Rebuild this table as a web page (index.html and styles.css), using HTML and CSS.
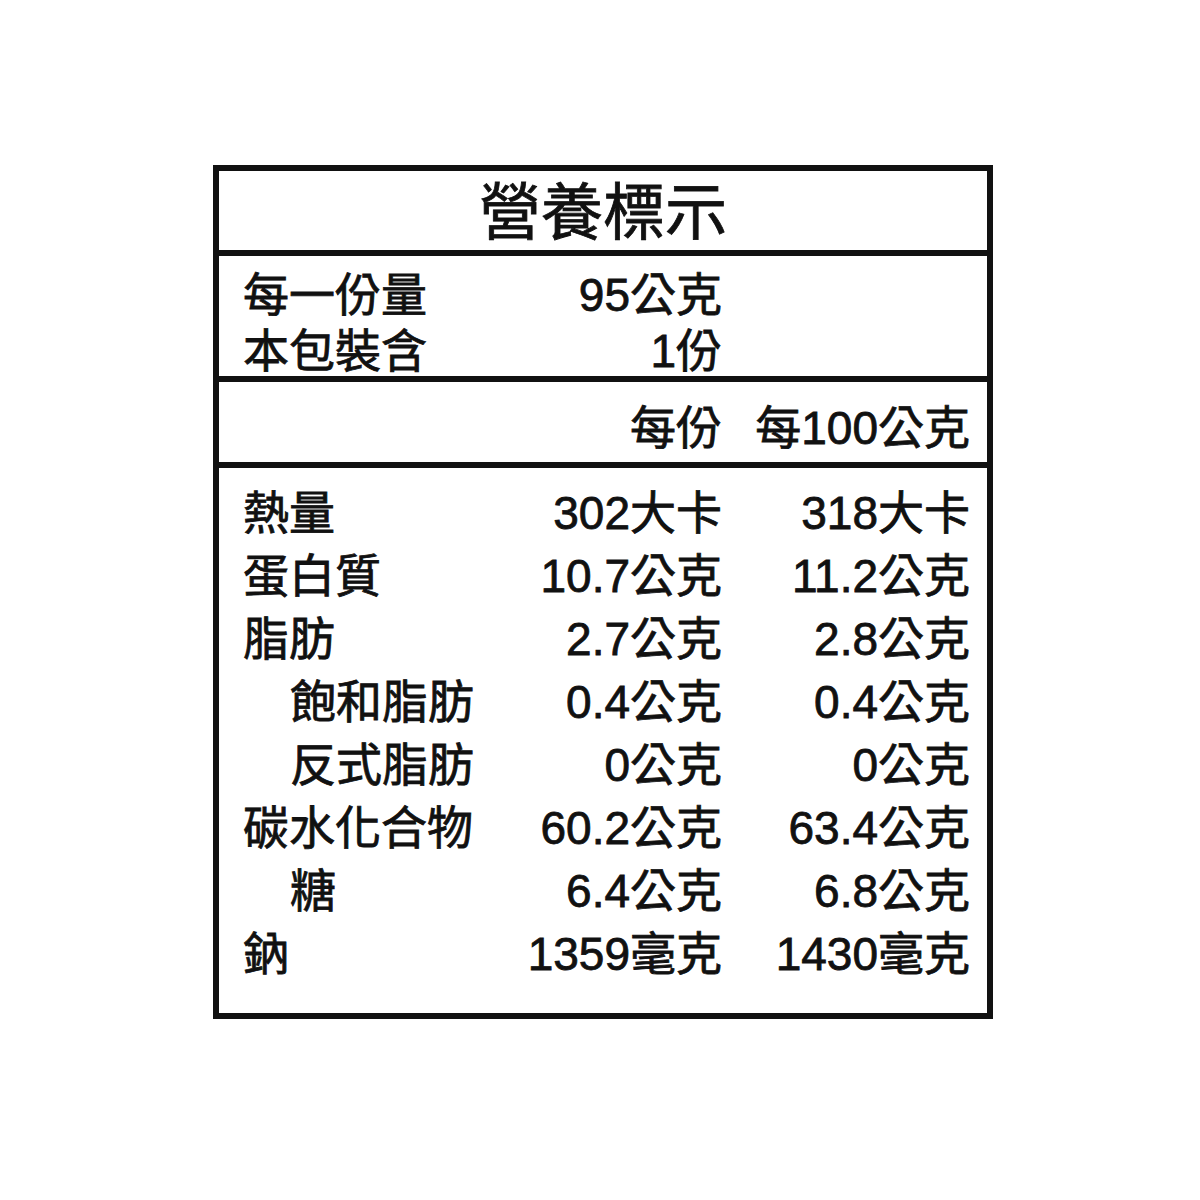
FILE: index.html
```html
<!DOCTYPE html>
<html lang="zh-Hant">
<head>
<meta charset="utf-8">
<title>營養標示</title>
<link rel="stylesheet" href="styles.css">
</head>
<body>
<div class="label">
  <div class="title">營養標示</div>
  <div class="section serving">
    <div class="row"><span class="name">每一份量</span><span class="v1">95公克</span><span class="v2"></span></div>
    <div class="row"><span class="name">本包裝含</span><span class="v1">1份</span><span class="v2"></span></div>
  </div>
  <div class="section head">
    <div class="row"><span class="name"></span><span class="v1">每份</span><span class="v2">每100公克</span></div>
  </div>
  <div class="section nutrients">
    <div class="row"><span class="name">熱量</span><span class="v1">302大卡</span><span class="v2">318大卡</span></div>
    <div class="row"><span class="name">蛋白質</span><span class="v1">10.7公克</span><span class="v2">11.2公克</span></div>
    <div class="row"><span class="name">脂肪</span><span class="v1">2.7公克</span><span class="v2">2.8公克</span></div>
    <div class="row"><span class="name sub">飽和脂肪</span><span class="v1">0.4公克</span><span class="v2">0.4公克</span></div>
    <div class="row"><span class="name sub">反式脂肪</span><span class="v1">0公克</span><span class="v2">0公克</span></div>
    <div class="row"><span class="name">碳水化合物</span><span class="v1">60.2公克</span><span class="v2">63.4公克</span></div>
    <div class="row"><span class="name sub">糖</span><span class="v1">6.4公克</span><span class="v2">6.8公克</span></div>
    <div class="row"><span class="name">鈉</span><span class="v1">1359毫克</span><span class="v2">1430毫克</span></div>
  </div>
</div>
</body>
</html>
```
FILE: styles.css
```css
html, body {
  margin: 0;
  background: #ffffff;
}
body {
  padding: 165px 0 0 213px;
  font-family: "Liberation Sans", "Noto Sans CJK TC", sans-serif;
  color: #111111;
  -webkit-text-stroke: 0.8px #111111;
}
.label {
  width: 780px;
  height: 854px;
  box-sizing: border-box;
  border: 6px solid #111111;
  display: flex;
  flex-direction: column;
}
.title {
  height: 79px;
  display: flex;
  align-items: center;
  justify-content: center;
  font-size: 62px;
  line-height: 1;
  padding-top: 6px;
  box-sizing: border-box;
}
.section {
  border-top: 6px solid #111111;
  padding: 0 17px 0 24px;
}
.row {
  display: grid;
  grid-template-columns: 255px 224px 248px;
  align-items: center;
  font-size: 46px;
}
.v1, .v2 {
  text-align: right;
  white-space: nowrap;
}
.name {
  white-space: nowrap;
}
.name.sub {
  padding-left: 47px;
}
.serving {
  height: 126px;
  box-sizing: border-box;
  padding-top: 2px;
}
.serving .row {
  height: 56px;
}
.head {
  height: 86px;
  box-sizing: border-box;
  display: flex;
  flex-direction: column;
  justify-content: center;
  padding-top: 4px;
}
.nutrients {
  flex: 1;
  padding-top: 8px;
}
.nutrients .row {
  height: 63px;
}
```
